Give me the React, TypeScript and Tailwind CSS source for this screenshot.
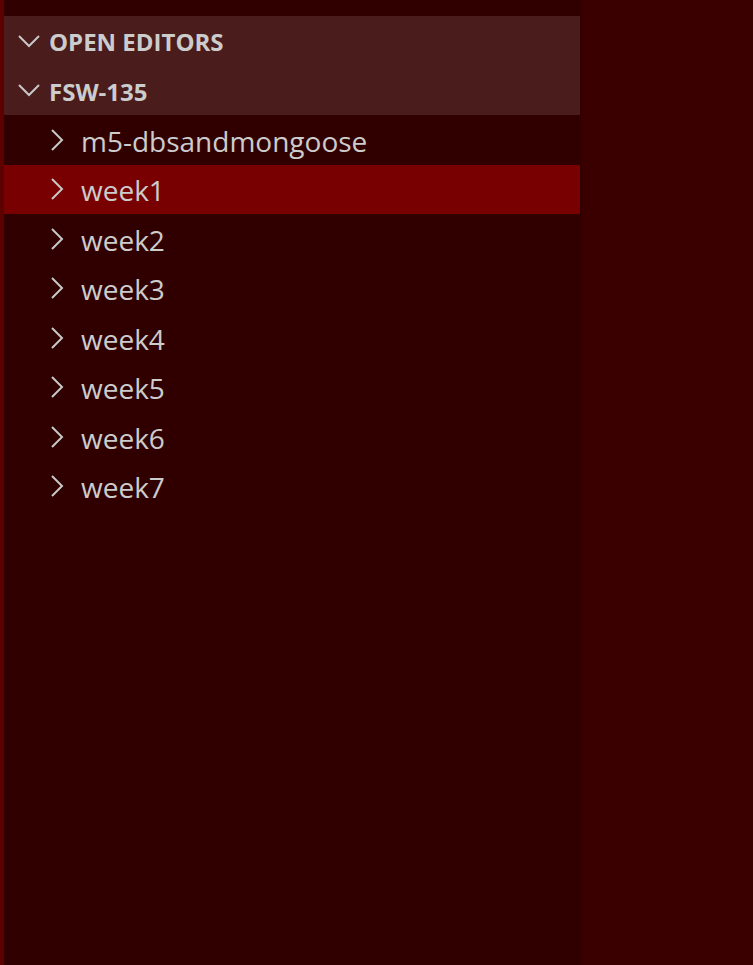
import React from 'react';

const folders = ['m5-dbsandmongoose', 'week1', 'week2', 'week3', 'week4', 'week5', 'week6', 'week7'];

const ChevronDown = () => (
  <svg width="24" height="14" viewBox="0 0 24 14" fill="none" className="shrink-0">
    <path d="M2 2l10 10L22 2" stroke="#c8c8c8" strokeWidth="2" />
  </svg>
);

const ChevronRight = () => (
  <svg width="14" height="24" viewBox="0 0 14 24" fill="none" className="shrink-0">
    <path d="M2 2l10 10L2 22" stroke="#c8c8c8" strokeWidth="2" />
  </svg>
);

export default function App() {
  return (
    <div
      className="flex h-screen w-full overflow-hidden"
      style={{ fontFamily: '"Open Sans", "Noto Sans", "Liberation Sans", sans-serif' }}
    >
      <div className="w-[4px] shrink-0 bg-[#5c0000]" />
      <div className="w-[577px] shrink-0 bg-[#300000] pt-[16px] border-r border-[#2c0000]">
        <div className="bg-[#4a1c1c]">
          <div className="flex h-[49.5px] items-center gap-[8px] pl-[13px] text-[24px] font-bold text-[#cccccc]">
            <ChevronDown />
            <span className="pt-[3px]">OPEN EDITORS</span>
          </div>
          <div className="flex h-[49.5px] items-center gap-[8px] pl-[13px] text-[24px] font-bold text-[#cccccc]">
            <ChevronDown />
            <span className="pt-[3px]">FSW-135</span>
          </div>
        </div>
        <div>
          {folders.map((name) => (
            <div
              key={name}
              className={`flex h-[49.5px] items-center gap-[17px] pl-[46px] text-[28px] text-[#cccccc] ${
                name === 'week1' ? 'bg-[#780000]' : ''
              }`}
            >
              <ChevronRight />
              <span className="pt-[2px]">{name}</span>
            </div>
          ))}
        </div>
      </div>
      <div className="flex-1 bg-[#3a0000]" />
    </div>
  );
}
